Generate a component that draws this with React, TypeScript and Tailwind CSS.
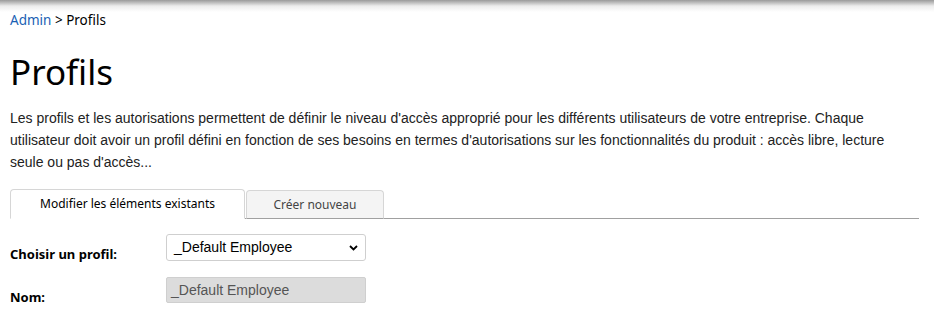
import React from "react";

export default function App() {
  const fira = { fontFamily: '"Noto Sans", "Open Sans", sans-serif' };
  const arial = { fontFamily: '"Liberation Sans", Arial, sans-serif' };
  return (
    <div className="relative w-[934px] h-[324px] bg-white overflow-hidden">
      <div className="h-[12px] w-full bg-gradient-to-b from-[#9a9a9a] via-[#ececec] to-white absolute top-0 left-0" />
      <div className="px-[10px] pt-[11px]">
        <div className="text-[13.5px] leading-[18px] text-black" style={fira}>
          <span className="text-[#1a5fb4]">Admin</span> &gt; Profils
        </div>
        <h1 className="mt-[21px] text-[35px] leading-[44px] font-normal text-black" style={fira}>
          Profils
        </h1>
        <p className="mt-[13px] w-[900px] text-[14px] leading-[22px] text-[#222]" style={arial}>
          Les profils et les autorisations permettent de définir le niveau d'accès approprié pour les différents utilisateurs de votre entreprise. Chaque utilisateur doit avoir un profil défini en fonction de ses besoins en termes d'autorisations sur les fonctionnalités du produit : accès libre, lecture seule ou pas d'accès...
        </p>
        <div className="mt-[16px] flex items-end w-[909px] border-b border-[#a0a0a0]" style={fira}>
          <div className="w-[235px] h-[30px] -mb-px bg-white border border-[#d6d6d6] border-b-white rounded-t-[4px] flex items-center justify-center text-[12px] text-black">
            Modifier les éléments existants
          </div>
          <div className="ml-[1px] w-[138px] h-[29px] -mb-px bg-[#f4f4f4] border border-[#d6d6d6] border-b-[#a0a0a0] rounded-t-[4px] flex items-center justify-center text-[12px] text-[#444]">
            Créer nouveau
          </div>
        </div>
        <div className="mt-[15px] flex items-start">
          <label className="w-[156px] mt-[11px] leading-[18px] text-[13px] font-bold text-black" style={fira}>
            Choisir un profil:
          </label>
          <div className="relative w-[200px] h-[27px] border border-[#cfcfcf] rounded-[3px] bg-white flex items-center pl-[7px] text-[14px] text-black" style={arial}>
            _Default Employee
            <svg className="absolute right-[7px] top-[10px]" width="9" height="6" viewBox="0 0 9 6">
              <path d="M1 1 L4.5 4.5 L8 1" stroke="#000" strokeWidth="1.8" fill="none" />
            </svg>
          </div>
        </div>
        <div className="mt-[14px] flex items-start">
          <label className="w-[156px] mt-[11px] leading-[18px] text-[13px] font-bold text-black" style={fira}>
            Nom:
          </label>
          <div className="w-[200px] h-[26px] border border-[#cfcfcf] rounded-[2px] bg-[#dcdcdc] flex items-center pl-[4px] text-[14px] text-[#555]" style={arial}>
            _Default Employee
          </div>
        </div>
      </div>
    </div>
  );
}
